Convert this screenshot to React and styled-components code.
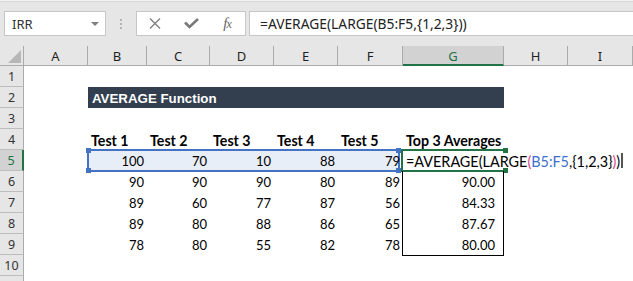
import React from 'react';
import styled, { createGlobalStyle } from 'styled-components';

const Global = createGlobalStyle`
  html, body {
    margin: 0;
    background: #fff;
    overflow: hidden;
  }
`;

const GREEN = '#217346';
const BLUE = '#4472c4';

const Window = styled.div`
  width: 633px;
  height: 281px;
  overflow: hidden;
  background: #fff;
`;

const FormulaBar = styled.div`
  display: flex;
  align-items: center;
  box-sizing: border-box;
  height: 46px;
  padding: 10px 0 10px 4px;
  background: #e6e6e6;
  border-top: 1px solid #f2f2f2;
  box-shadow: inset 0 1px 0 #d8d8d8;
`;

const Box = styled.div`
  box-sizing: border-box;
  height: 25px;
  background: #fff;
  border: 1px solid #c6c6c6;
  display: flex;
  align-items: center;
`;

const NameBox = styled(Box)`
  width: 102px;
  padding: 0 6px 0 7px;
  justify-content: space-between;
  font: 13px 'Noto Sans', sans-serif;
  color: #333;
`;

const Caret = styled.span`
  width: 0;
  height: 0;
  border-left: 4px solid transparent;
  border-right: 4px solid transparent;
  border-top: 4px solid #7f7f7f;
`;

const Grip = styled.div`
  display: flex;
  flex-direction: column;
  gap: 2px;
  margin: 0 14px;
`;

const Dot = styled.span`
  width: 2px;
  height: 2px;
  background: #b3b3b3;
`;

const FxButtons = styled(Box)`
  width: 110px;
  display: grid;
  grid-template-columns: repeat(3, 1fr);
  justify-items: center;
  margin-right: 3px;
`;

const Fx = styled.span`
  font: italic 15px 'Liberation Serif', serif;
  color: #666;
  letter-spacing: -1px;

  small {
    font-size: 12px;
  }
`;

const FormulaInput = styled(Box)`
  flex: 1;
  padding-left: 10px;
  border-right: none;
  font: 13.8px 'Noto Sans', sans-serif;
  color: #222;
  white-space: nowrap;
`;

const Sheet = styled.div`
  display: grid;
  grid-template-columns: 24px 64px 59px 63px 64px 64px 65px 101px 64px 1fr;
  grid-template-rows: 20px repeat(11, 21px);
  background: #fff;
`;

const Corner = styled.div`
  grid-row: 1;
  grid-column: 1;
  position: relative;
  background: #e6e6e6;
  border-right: 1px solid #ababab;
  border-bottom: 1px solid #ababab;

  &::after {
    content: '';
    position: absolute;
    right: 2px;
    bottom: 2px;
    border-left: 13px solid transparent;
    border-bottom: 13px solid #b7b7b7;
  }
`;

const ColHeader = styled.div`
  grid-row: 1;
  grid-column: ${p => p.$col};
  box-sizing: border-box;
  display: flex;
  align-items: center;
  justify-content: center;
  background: ${p => (p.$active ? '#d2d2d2' : '#e6e6e6')};
  border-right: 1px solid #ababab;
  border-bottom: ${p => (p.$active ? `2px solid ${GREEN}` : '1px solid #ababab')};
  font: 13px 'Noto Sans', sans-serif;
  color: ${p => (p.$active ? GREEN : '#1f1f1f')};
  padding-top: ${p => (p.$active ? 1 : 0)}px;
`;

const RowHeader = styled.div`
  grid-row: ${p => p.$row};
  grid-column: 1;
  box-sizing: border-box;
  display: flex;
  align-items: center;
  justify-content: center;
  background: ${p => (p.$active ? '#d2d2d2' : '#e6e6e6')};
  border-bottom: 1px solid #bdbdbd;
  border-right: ${p => (p.$active ? `2px solid ${GREEN}` : '1px solid #ababab')};
  font: 12.5px 'Noto Sans', sans-serif;
  color: ${p => (p.$active ? GREEN : '#333')};
`;

const Cell = styled.div`
  grid-row: ${p => p.$row};
  grid-column: ${p => p.$col} / span ${p => p.$span || 1};
  z-index: 1;
  display: flex;
  justify-content: ${p => (p.$right ? 'flex-end' : 'flex-start')};
  box-sizing: border-box;
  padding: 2px ${p => p.$padR ?? 3}px 0 3px;
  font: ${p => (p.$bold ? '700 14.2px' : '400 13px')}/19px Lato, sans-serif;
  color: #000;
  white-space: nowrap;
  min-width: 0;
`;

const Title = styled(Cell)`
  background: #333f4f;
  color: #fff;
  padding: 2px 4px 0;
  font: 700 13.3px/19px 'Liberation Sans', Arial, sans-serif;
`;

const EditText = styled(Cell)`
  font-size: 14.4px;
  overflow: visible;
`;

const Ref = styled.span`
  color: ${p => p.$c};
`;

const TextCursor = styled.span`
  display: inline-block;
  width: 2px;
  height: 15px;
  margin: 1px 0 0 1px;
  background: #555;
`;

const Area = styled.div`
  grid-row: ${p => p.$row} / span ${p => p.$rows || 1};
  grid-column: ${p => p.$col} / span ${p => p.$cols || 1};
  position: relative;
  pointer-events: none;
`;

const RefRange = styled(Area)`
  z-index: 0;
  margin: -1px 3px -1px -1px;
  border: 2px solid ${BLUE};
  background: #e8eef8;
`;

const ActiveCell = styled(Area)`
  z-index: 2;
  margin: -1px -1px -1px -2px;
  border: 2px solid ${GREEN};
  border-right: none;
`;

const Outline = styled(Area)`
  z-index: 2;
  margin: 0 0 -1px -1px;
  border: 1px solid #000;
  border-top: none;
`;

const Handle = styled.span`
  position: absolute;
  width: 5px;
  height: 5px;
  background: ${p => p.$color};
  ${p => (p.$top ? 'top: -3px;' : 'bottom: -3px;')}
  ${p => (p.$left ? 'left: -3px;' : 'right: -3px;')}
`;

const COLS = ['A', 'B', 'C', 'D', 'E', 'F', 'G', 'H', 'I'];
// row 11 only shows its top edge in the window, so its number stays hidden
const ROWS = [1, 2, 3, 4, 5, 6, 7, 8, 9, 10, 11];

const headers = ['Test 1', 'Test 2', 'Test 3', 'Test 4', 'Test 5', 'Top 3 Averages'];
const scores = [
  [100, 70, 10, 88, 79],
  [90, 90, 90, 80, 89],
  [89, 60, 77, 87, 56],
  [89, 80, 88, 86, 65],
  [78, 80, 55, 82, 78],
];
const averages = ['90.00', '84.33', '87.67', '80.00'];

// sheet row n sits on grid row n + 1, column B on grid column 3
const gr = n => n + 1;

export default function App() {
  return (
    <Window>
      <Global />
      <FormulaBar>
        <NameBox>
          <span>IRR</span>
          <Caret />
        </NameBox>
        <Grip>
          <Dot />
          <Dot />
          <Dot />
        </Grip>
        <FxButtons>
          <svg width="12" height="11" viewBox="0 0 12 11">
            <path d="M1 0.5 L11 10.5 M11 0.5 L1 10.5" stroke="#808080" strokeWidth="1.4" fill="none" />
          </svg>
          <svg width="15" height="11" viewBox="0 0 15 11">
            <path d="M1 4.5 L5.5 9 L14 1" stroke="#7a7a7a" strokeWidth="2.6" fill="none" />
          </svg>
          <Fx>
            f<small>x</small>
          </Fx>
        </FxButtons>
        <FormulaInput>=AVERAGE(LARGE(B5:F5,{'{'}1,2,3{'}'}))</FormulaInput>
      </FormulaBar>

      <Sheet>
        <Corner />
        {COLS.map((c, i) => (
          <ColHeader key={c} $col={i + 2} $active={c === 'G'}>
            {c}
          </ColHeader>
        ))}
        {ROWS.map(r => (
          <RowHeader key={r} $row={gr(r)} $active={r === 5}>
            {r < 11 ? r : null}
          </RowHeader>
        ))}

        <RefRange $row={gr(5)} $col={3} $cols={5}>
          <Handle $color={BLUE} $top $left />
          <Handle $color={BLUE} $top />
          <Handle $color={BLUE} $left />
          <Handle $color={BLUE} />
        </RefRange>

        <Title $row={gr(2)} $col={3} $span={6}>
          AVERAGE Function
        </Title>

        {headers.map((h, i) => (
          <Cell key={h} $row={gr(4)} $col={i + 3} $bold>
            {h}
          </Cell>
        ))}

        {scores.map((row, ri) =>
          row.map((v, ci) => (
            <Cell key={`${ri}-${ci}`} $row={gr(5 + ri)} $col={ci + 3} $right>
              {v}
            </Cell>
          ))
        )}

        <EditText $row={gr(5)} $col={8} $span={3}>
          =AVERAGE(LARGE<Ref $c="#d9468c">(</Ref>
          <Ref $c="#3e6fd0">B5:F5</Ref>,{'{'}1,2,3{'}'}
          <Ref $c="#d9468c">)</Ref>)
          <TextCursor />
        </EditText>

        {averages.map((v, i) => (
          <Cell key={v} $row={gr(6 + i)} $col={8} $right $padR={9}>
            {v}
          </Cell>
        ))}

        <ActiveCell $row={gr(5)} $col={8}>
          <Handle $color={GREEN} $top />
          <Handle $color={GREEN} />
        </ActiveCell>
        <Outline $row={gr(6)} $col={8} $rows={4} />
      </Sheet>
    </Window>
  );
}
